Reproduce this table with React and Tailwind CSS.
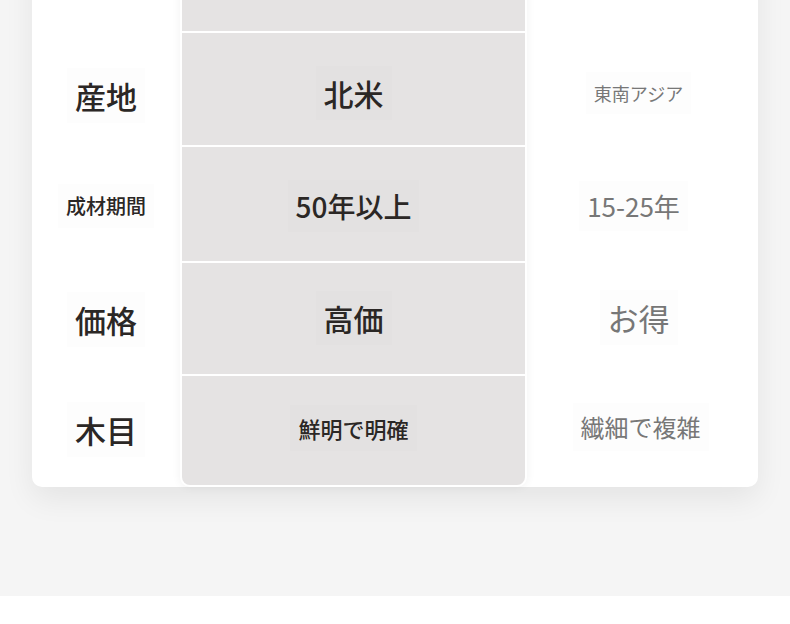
import React from "react";

// offsets nudge each label to sit where the reference has it
const rows = [
  { h: "h-[116px]", label: null, a: null, b: null },
  {
    h: "h-[114px]",
    label: { text: "産地", size: "text-[31px]", pad: "pt-[10px]" },
    a: { text: "北米", size: "text-[30px]", pad: "pt-[8px]" },
    b: { text: "東南アジア", size: "text-[18px]", pad: "pt-[6px]" },
  },
  {
    h: "h-[116px]",
    label: { text: "成材期間", size: "text-[20px]", pad: "pt-[2px]" },
    a: { text: "50年以上", size: "text-[28px]", pad: "pt-[4px]" },
    b: { text: "15-25年", size: "text-[26px]", pad: "pt-[2px] pr-[10px]" },
  },
  {
    h: "h-[113px]",
    label: { text: "価格", size: "text-[31px]", pad: "pb-[0px]" },
    a: { text: "高価", size: "text-[30px]", pad: "pb-[2px]" },
    b: { text: "お得", size: "text-[31px]", pad: "pb-[4px]" },
  },
  {
    h: "h-[109px]",
    label: { text: "木目", size: "text-[31px]", pad: "pb-[2px]" },
    a: { text: "鮮明で明確", size: "text-[22px]", pad: "pb-[6px]" },
    b: { text: "繊細で複雑", size: "text-[24px]", pad: "pb-[8px] pl-[4px]" },
  },
];

const Cell = ({ item, color, shade }) => {
  if (!item) return null;
  return (
    <span className={`${item.size} ${color} ${shade} leading-none px-2 py-3`}>
      {item.text}
    </span>
  );
};

const App = () => {
  return (
    <div
      className="w-full min-h-[624px] bg-white"
      style={{ fontFamily: '"Noto Sans CJK JP", "Noto Sans", sans-serif' }}
    >
      <div className="h-[596px] bg-[#f5f5f5] overflow-hidden px-8">
        <div className="mt-[-83px] flex bg-white rounded-[10px] shadow-[0_12px_30px_rgba(0,0,0,0.07)]">
          {/* label column */}
          <div className="flex flex-col w-[148px] pb-[2px]">
            {rows.map((r, i) => (
              <div
                key={i}
                className={`${r.h} flex items-center justify-center ${r.label ? r.label.pad : ""}`}
              >
                <Cell item={r.label} color="text-[#2b2725] font-medium" shade="bg-[#fdfdfd]" />
              </div>
            ))}
          </div>
          {/* wood A column */}
          <div className="flex flex-col w-[347px] bg-[#e5e3e3] border-x-2 border-b-2 border-white rounded-b-[10px] shadow-[0_0_10px_rgba(0,0,0,0.06)]">
            {rows.map((r, i) => (
              <div
                key={i}
                className={`${r.h} flex items-center justify-center ${r.a ? r.a.pad : ""} ${
                  i < rows.length - 1 ? "border-b-2 border-white" : ""
                }`}
              >
                <Cell item={r.a} color="text-[#2b2725] font-medium" shade="bg-[#e3e1e1]" />
              </div>
            ))}
          </div>
          {/* wood B column */}
          <div className="flex flex-col w-[231px] pb-[2px] pr-2">
            {rows.map((r, i) => (
              <div
                key={i}
                className={`${r.h} flex items-center justify-center ${r.b ? r.b.pad : ""}`}
              >
                <Cell item={r.b} color="text-[#777777] font-normal" shade="bg-[#fdfdfd]" />
              </div>
            ))}
          </div>
        </div>
      </div>
    </div>
  );
};

export default App;
